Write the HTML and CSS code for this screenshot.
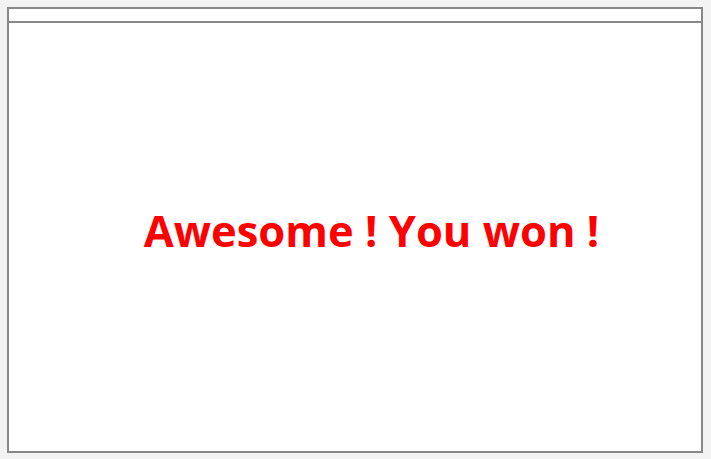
FILE: index.html
```html
<!DOCTYPE html>
<html>
<head>
<meta charset="utf-8">
<link rel="stylesheet" href="styles.css">
</head>
<body>
<div class="frame">
  <div class="topbar"></div>
  <div class="content">
    <h1 class="message">Awesome ! You won !</h1>
  </div>
</div>
</body>
</html>
```
FILE: styles.css
```css
html, body {
  margin: 0;
  padding: 0;
  background: #f3f3f3;
}
body {
  padding: 7px 8px 6px 7px;
  height: 459px;
  box-sizing: border-box;
}
.frame {
  height: 100%;
  border: 2px solid #888888;
  background: #ffffff;
  box-sizing: border-box;
  display: flex;
  flex-direction: column;
}
.topbar {
  height: 12px;
  border-bottom: 2px solid #888888;
  flex: none;
}
.content {
  flex: 1;
  display: flex;
  align-items: center;
  justify-content: center;
  padding: 0 0 14px 33px;
}
.message {
  margin: 0;
  font-family: "Open Sans", sans-serif;
  font-weight: 700;
  font-size: 43.5px;
  color: #ff0000;
  white-space: nowrap;
}
```
